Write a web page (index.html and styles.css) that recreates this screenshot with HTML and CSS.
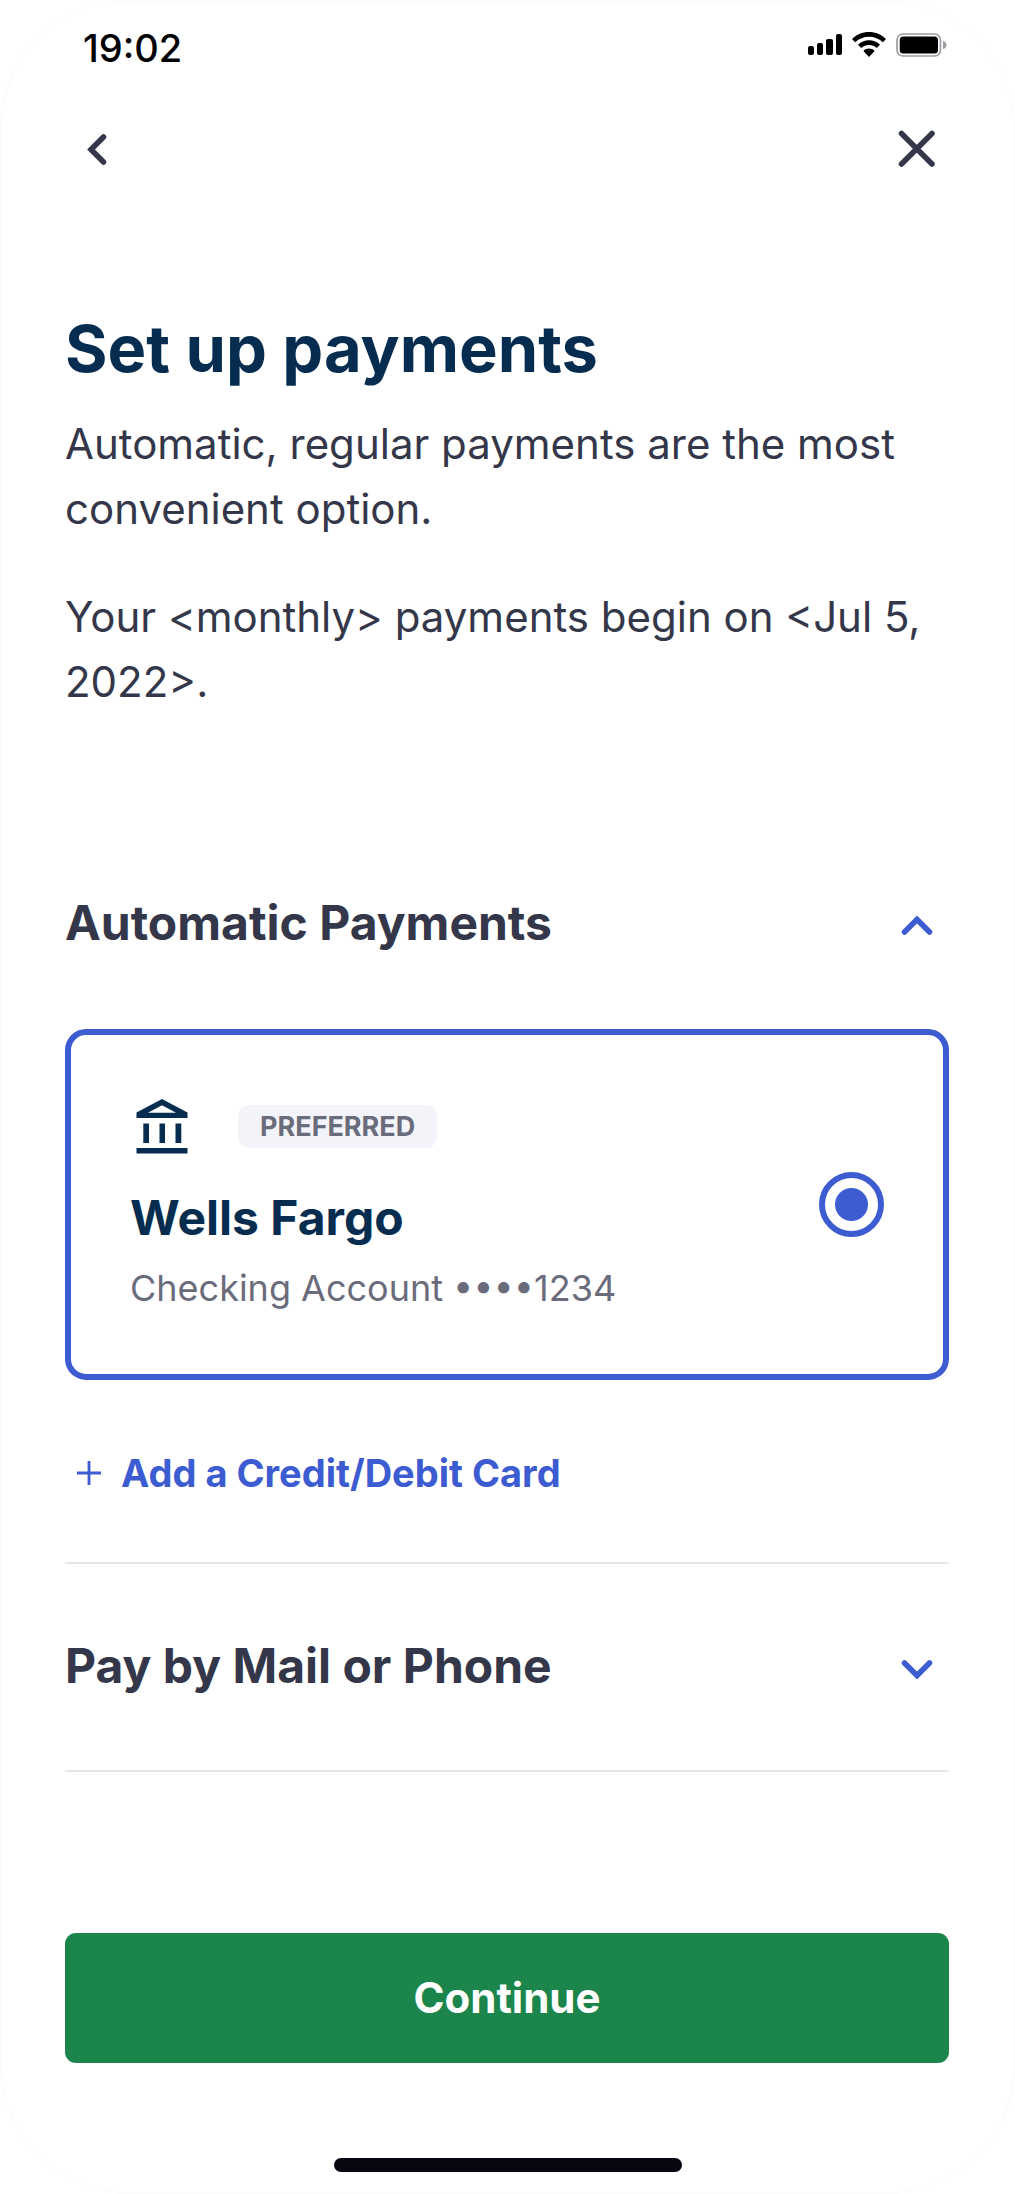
FILE: index.html
```html
<!DOCTYPE html>
<html lang="en">
<head>
<meta charset="utf-8">
<meta name="viewport" content="width=device-width, initial-scale=1">
<title>Set up payments</title>
<link rel="stylesheet" href="styles.css">
</head>
<body>
<div class="screen">
  <div class="status">
    <time class="status-time">19:02</time>
    <div class="status-icons">
      <svg width="34" height="22" viewBox="0 0 34 22" aria-hidden="true"><rect x="0" y="12" width="6" height="9" rx="2"/><rect x="9" y="9" width="6" height="12" rx="2"/><rect x="18" y="5" width="7" height="16" rx="2"/><rect x="28" y="0" width="6" height="21" rx="2"/></svg>
      <svg width="34" height="25" viewBox="0 0 34 25" aria-hidden="true"><path d="M17 0C23.500 0 29.500 2.500 34 7L30.800 10.200C27 6.600 22.200 4.700 17 4.700S7 6.600 3.200 10.200L0 7C4.500 2.500 10.500 0 17 0Z"/><path d="M17 8.300C21.200 8.300 25 9.900 28 12.700L24.800 15.900C22.600 13.900 19.900 12.900 17 12.900S11.400 13.900 9.200 15.900L6 12.700C9 9.900 12.800 8.300 17 8.300Z"/><path d="M17 16.500C19 16.500 20.800 17.200 22.200 18.400V19.600L17 25L11.800 19.600V18.400C13.200 17.200 15 16.500 17 16.500Z"/></svg>
      <svg width="51" height="24" viewBox="0 0 51 24" aria-hidden="true"><rect x="1" y="1" width="43.500" height="22" rx="6" fill="none" stroke="#9a9ca3" stroke-width="1.700"/><rect x="3.700" y="3.500" width="38.300" height="17" rx="3.500"/><path d="M47 8C49.300 8.500 50.500 10 50.500 12S49.300 15.500 47 16Z" fill="#9a9ca3"/></svg>
    </div>
  </div>

  <nav class="nav">
    <button class="icon-button" type="button" aria-label="Back">
      <svg width="64" height="64" viewBox="0 0 64 64" aria-hidden="true"><path d="M38.500 20L26 32.500L38.500 45" stroke-width="5.500"/></svg>
    </button>
    <button class="icon-button" type="button" aria-label="Close">
      <svg width="64" height="64" viewBox="0 0 64 64" aria-hidden="true"><path d="M16.500 16.500L47 47M47 16.500L16.500 47" stroke-width="5.500"/></svg>
    </button>
  </nav>

  <main class="content">
    <header class="intro">
      <h1 class="title">Set up payments</h1>
      <p class="text">Automatic, regular payments are the most convenient option.</p>
      <p class="text">Your &lt;monthly&gt; payments begin on &lt;Jul 5, 2022&gt;.</p>
    </header>

    <section class="section">
      <h2 class="section-heading">
        <button class="section-toggle" type="button" aria-expanded="true" aria-controls="automatic">
          Automatic Payments
          <svg width="64" height="64" viewBox="0 0 64 64" aria-hidden="true"><path d="M19.500 41L32 28.500L44.500 41" stroke-width="5.500"/></svg>
        </button>
      </h2>
      <div class="section-body" id="automatic">
        <label class="account">
          <span class="account-info">
            <span class="account-top">
              <svg width="64" height="64" viewBox="0 0 64 64" aria-hidden="true"><path fill-rule="evenodd" d="M32 5L57.500 18.500V24H6.500V18.500ZM32 11.300L18 18.700H46Z"/><path d="M13.300 29.500H19V49H13.300ZM29.500 29.500H35V49H29.500ZM45.500 29.500H51.300V49H45.500ZM6.500 54H57.500V59.500H6.500Z"/></svg>
              <span class="badge">PREFERRED</span>
            </span>
            <span class="account-name">Wells Fargo</span>
            <span class="account-detail">Checking Account ••••1234</span>
          </span>
          <input class="radio" type="radio" name="account" checked>
        </label>
        <button class="add" type="button">
          <svg width="26" height="26" viewBox="0 0 26 26" aria-hidden="true"><path d="M13 1V25M1 13H25" stroke-width="2.800"/></svg>
          Add a Credit/Debit Card
        </button>
      </div>
    </section>

    <section class="section">
      <h2 class="section-heading">
        <button class="section-toggle" type="button" aria-expanded="false">
          Pay by Mail or Phone
          <svg width="64" height="64" viewBox="0 0 64 64" aria-hidden="true"><path d="M19.500 29L32 41.500L44.500 29" stroke-width="5.500"/></svg>
        </button>
      </h2>
    </section>

    <button class="continue" type="button">Continue</button>
  </main>
  <div class="home-bar"></div>
</div>
</body>
</html>
```
FILE: styles.css
```css
* {
  box-sizing: border-box;
}

body {
  margin: 0;
  background: #fff;
  color: #34374a;
  font-family: Inter, "Liberation Sans", sans-serif;
}

h1, h2, p {
  margin: 0;
}

button {
  padding: 0;
  border: 0;
  background: none;
  color: inherit;
  font: inherit;
  cursor: pointer;
}

svg {
  display: block;
  flex: none;
}

.screen {
  display: flex;
  flex-direction: column;
  min-height: 100vh;
  padding-bottom: 21px;
  border-radius: 130px;
  box-shadow: inset 0 0 0 1px #fafafb;
}

.status {
  display: flex;
  justify-content: space-between;
  align-items: flex-start;
  padding: 26px 68px 0 83px;
}

.status-time {
  color: #000;
  font-size: 38px;
  font-weight: 500;
  line-height: 44px;
}

.status-icons {
  display: flex;
  align-items: center;
  gap: 10px;
  padding-top: 6px;
}

.nav {
  display: flex;
  justify-content: space-between;
  padding: 47px 66px 0 65px;
}

.icon-button svg,
.section-toggle svg,
.add svg {
  fill: none;
  stroke: currentColor;
  stroke-linecap: round;
}

.content {
  display: flex;
  flex-direction: column;
  padding: 128px 66px 0 65px;
}

.intro {
  margin-bottom: 177px;
}

.title {
  margin-bottom: 22px;
  color: #062d4f;
  font-size: 65px;
  font-weight: 700;
  line-height: 80px;
}

.text {
  font-size: 42px;
  line-height: 65px;
}

.text + .text {
  margin-top: 43px;
}

.section {
  border-bottom: 2px solid #e5e6e9;
}

.section + .section {
  padding: 70px 0 72px;
}

.section-heading {
  font-size: 48px;
  font-weight: 700;
  line-height: 64px;
}

.section-toggle {
  display: flex;
  justify-content: space-between;
  align-items: center;
  width: 100%;
  text-align: left;
}

.section-toggle svg {
  color: #3d5cd1;
}

.section-body {
  padding: 74px 0 63px;
}

.account {
  display: flex;
  justify-content: space-between;
  align-items: center;
  padding: 59px 59px 60px;
  border: 6px solid #3d5cd1;
  border-radius: 21px;
}

.account-info {
  display: flex;
  flex-direction: column;
}

.account-top {
  display: flex;
  align-items: center;
  gap: 44px;
  margin-bottom: 28px;
  fill: #062d4f;
}

.badge {
  padding: 0 22px;
  border-radius: 11px;
  background: #f3f4f9;
  color: #6b6c7b;
  font-size: 27px;
  font-weight: 700;
  line-height: 43px;
}

.account-name {
  margin-bottom: 12px;
  color: #062d4f;
  font-size: 48px;
  font-weight: 700;
  line-height: 64px;
}

.account-detail {
  color: #6b6c7b;
  font-size: 36px;
  line-height: 52px;
}

.radio {
  flex: none;
  width: 65px;
  height: 65px;
  margin: 0;
  border: 6px solid #3d5cd1;
  border-radius: 50%;
  background: radial-gradient(circle, #3d5cd1 16px, transparent 17px);
  appearance: none;
}

.add {
  display: flex;
  align-items: center;
  gap: 19px;
  margin-top: 67px;
  padding-left: 11px;
  color: #3d5cd1;
  font-size: 38px;
  font-weight: 700;
  line-height: 52px;
}

.add svg {
  stroke-linecap: butt;
}

.continue {
  margin-top: 161px;
  padding: 33px 0;
  border-radius: 11px;
  background: #1b854b;
  color: #fff;
  font-size: 42px;
  font-weight: 700;
  line-height: 64px;
}

.home-bar {
  align-self: center;
  width: 348px;
  max-width: 60%;
  height: 14px;
  margin-top: 95px;
  border-radius: 7px;
  background: #090611;
}
```
